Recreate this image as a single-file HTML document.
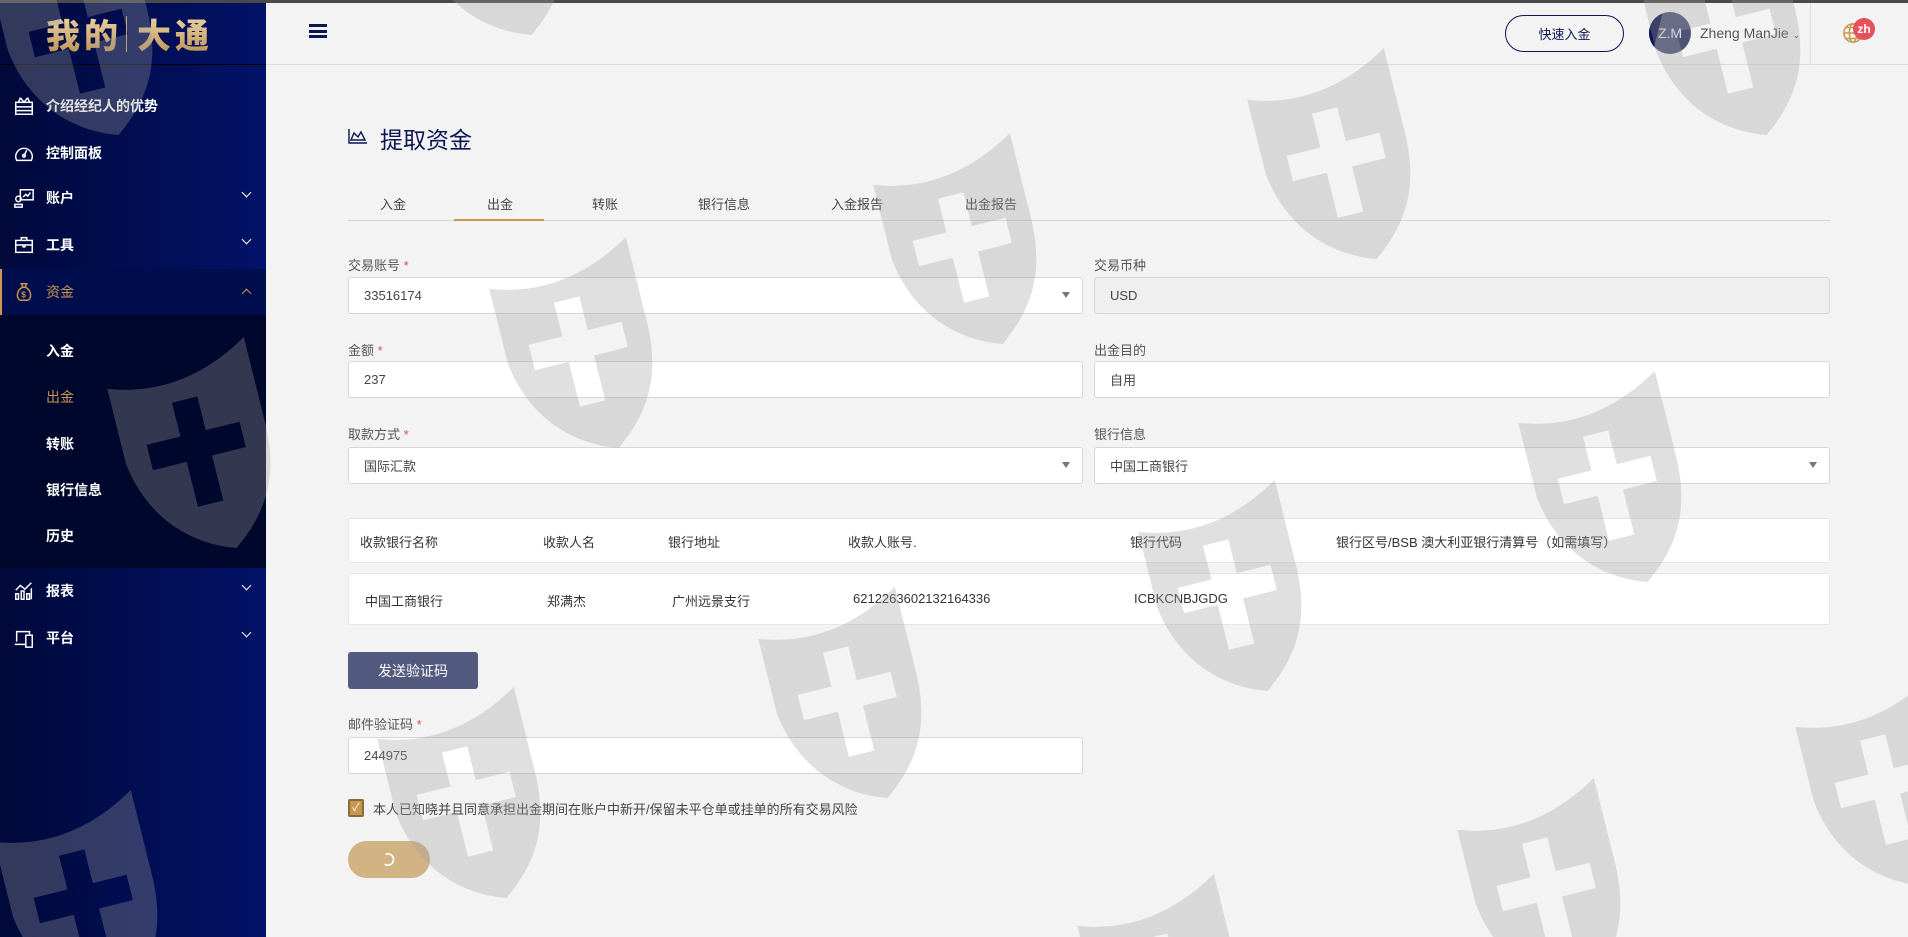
<!DOCTYPE html>
<html><head><meta charset="utf-8">
<style>
*{box-sizing:border-box;margin:0;padding:0}
html,body{width:1908px;height:937px;overflow:hidden}
body{background:#f3f3f3;font-family:"Liberation Sans","Noto Sans CJK SC",sans-serif;position:relative;color:#333}
.topline{position:absolute;left:0;top:0;width:1908px;height:3px;background:#4a4a4a;z-index:5}
.side{position:absolute;left:0;top:0;width:266px;height:937px;background:linear-gradient(90deg,#00093a 0%,#021268 100%)}
.logo{position:absolute;left:0;top:3px;width:266px;height:62px;border-bottom:1px solid #000;display:flex;align-items:center;padding-left:46px}
.logo span{font-family:"Noto Sans CJK SC",sans-serif;font-weight:900;font-size:34px;letter-spacing:4px;color:#d7b27a;background:linear-gradient(180deg,#f3dfb0,#b98d4e);-webkit-background-clip:text;background-clip:text;-webkit-text-fill-color:transparent}
.logo i{display:inline-block;width:1px;height:36px;background:#c9a56a;margin:0 10px 0 4px;vertical-align:middle}
.mi{position:absolute;left:0;width:266px;height:46px;display:flex;align-items:center;color:#fff;font-size:14px;font-weight:bold}
.mi svg{position:absolute;left:13px;width:22px;height:22px}
.mi .t{position:absolute;left:46px}
.mi .ch{position:absolute;left:243px;top:14px;width:7px;height:7px;border-right:1.5px solid #fff;border-bottom:1.5px solid #fff;transform:rotate(45deg)}
.mi .ch.up{top:21px;transform:rotate(-135deg);border-color:#c9974d}
.active{background:#000d4d;border-left:2px solid #c9974d;color:#c9974d}
.sub{position:absolute;left:0;top:315px;width:266px;height:253px;background:#00072c}
.si{position:absolute;left:46px;color:#fff;font-size:14px;font-weight:bold}
.hdr{position:absolute;left:266px;top:3px;right:0;height:62px;border-bottom:1px solid #dcdcdc}
.burger{position:absolute;left:309px;top:24px;width:18px;height:14px;border-top:3px solid #0c1650;border-bottom:3px solid #0c1650}
.burger:after{content:"";position:absolute;left:0;top:3px;width:18px;height:3px;background:#0c1650}
.qbtn{position:absolute;left:1505px;top:15px;width:119px;height:37px;border:1.5px solid #0c1650;border-radius:19px;font-size:13px;color:#0c1650;display:flex;align-items:center;justify-content:center}
.av{position:absolute;left:1649px;top:12px;width:42px;height:42px;border-radius:50%;background:#4e5478;color:#e8e8f0;font-size:14px;display:flex;align-items:center;justify-content:center;overflow:hidden}
.name{position:absolute;left:1700px;top:25px;font-size:14px;color:#555}
.vsep{position:absolute;left:1810px;top:3px;width:1px;height:62px;background:#ddd}
.badge{position:absolute;left:1853px;top:18px;width:22px;height:22px;border-radius:50%;background:#e8505b;color:#fff;font-size:12px;font-weight:bold;display:flex;align-items:center;justify-content:center}
.title{position:absolute;left:380px;top:121px;font-size:23px;color:#0c1650}
.tabs{position:absolute;left:348px;top:220px;width:1482px;height:1px;background:#d4d4d4}
.tab{position:absolute;top:194px;font-size:13px;color:#444}
.uline{position:absolute;left:454px;top:219px;width:90px;height:2px;background:#c9974d}
.lbl{position:absolute;font-size:13px;color:#555}
.lbl b{color:#e04a4a;font-weight:normal}
.inp{position:absolute;height:37px;background:#fff;border:1px solid #d6d6d6;border-radius:3px;font-size:13px;color:#444;padding-left:15px;display:flex;align-items:center}
.inp.dis{background:#efefef}
.arr{position:absolute;right:12px;top:14px;border-left:4px solid transparent;border-right:4px solid transparent;border-top:6px solid #777}
.box{position:absolute;left:348px;width:1482px;background:#fff;border:1px solid #e6e6e6;border-radius:3px}
.c{position:absolute;font-size:13px;color:#333;white-space:nowrap}
.sbtn{position:absolute;left:348px;top:652px;width:130px;height:37px;background:#535a7f;border-radius:3px;color:#fff;font-size:14px;display:flex;align-items:center;justify-content:center}
.cb{position:absolute;left:348px;top:799px;width:16px;height:18px;background:#c9974d;border:2px solid #8a6a3a;border-radius:2px;color:#fff;font-size:11px;text-align:center;line-height:14px}
.gbtn{position:absolute;left:348px;top:841px;width:82px;height:37px;background:#d1b384;border-radius:19px}
.wm{position:absolute;left:0;top:0;width:1908px;height:937px;pointer-events:none;z-index:10}
</style></head><body>
<div class="topline"></div>
<div class="side">
 <div class="logo"><span>我的</span><i></i><span>大通</span></div>
 <div class="mi" style="top:83px"><svg viewBox="0 0 24 24" fill="none" stroke="#fff" stroke-width="1.6"><rect x="3" y="8" width="18" height="13"/><path d="M3 13h18M3 17h18M12 8 8 3M12 8l4-5M8 3l-2 5M16 3l2 5"/></svg><span class="t">介绍经纪人的优势</span></div>
 <div class="mi" style="top:130px"><svg viewBox="0 0 24 24" fill="none" stroke="#fff" stroke-width="1.6"><path d="M4 20a9 9 0 1 1 16 0Z"/><path d="M12 15l3-6"/><circle cx="12" cy="15" r="1.5"/></svg><span class="t">控制面板</span></div>
 <div class="mi" style="top:175px"><svg viewBox="0 0 24 24" fill="none" stroke="#fff" stroke-width="1.6"><rect x="8" y="3" width="14" height="11"/><circle cx="6" cy="13" r="3"/><path d="M2 22v-3h8v3zM11 11l3-3 2 2 3-4"/></svg><span class="t">账户</span><span class="ch"></span></div>
 <div class="mi" style="top:222px"><svg viewBox="0 0 24 24" fill="none" stroke="#fff" stroke-width="1.6"><rect x="3" y="7" width="18" height="13"/><path d="M9 7V4h6v3M3 12h18M11 12v2h2v-2"/></svg><span class="t">工具</span><span class="ch"></span></div>
 <div class="mi active" style="top:269px"><svg viewBox="0 0 24 24" fill="none" stroke="#c9974d" stroke-width="1.6" style="left:11px"><path d="M9 3h6l-2 4h-2zM10 7c-6 3-7 12-2 14h8c5-2 4-11-2-14z"/><text x="9" y="18" font-size="9" fill="#c9974d" stroke="none">$</text></svg><span class="t" style="left:44px;font-weight:normal">资金</span><span class="ch up" style="left:241px"></span></div>
 <div class="sub">
  <div class="si" style="top:26px">入金</div>
  <div class="si" style="top:72px;color:#c9974d;font-weight:normal">出金</div>
  <div class="si" style="top:119px">转账</div>
  <div class="si" style="top:165px">银行信息</div>
  <div class="si" style="top:211px">历史</div>
 </div>
 <div class="mi" style="top:568px"><svg viewBox="0 0 24 24" fill="none" stroke="#fff" stroke-width="1.6"><path d="M3 21v-6h3v6zM9 21v-9h3v9zM15 21v-6h3v6zM20 21V9"/><path d="M3 11l5-5 5 4 7-7"/></svg><span class="t">报表</span><span class="ch"></span></div>
 <div class="mi" style="top:615px"><svg viewBox="0 0 24 24" fill="none" stroke="#fff" stroke-width="1.6"><path d="M4 16V5h14v3M2 19h12"/><rect x="14" y="9" width="7" height="13"/></svg><span class="t">平台</span><span class="ch"></span></div>
</div>
<div class="hdr"></div>
<div class="burger"></div>
<div class="qbtn">快速入金</div>
<div class="av"><div style="position:absolute;left:-14px;top:-4px;width:22px;height:52px;background:#0c1650;transform:rotate(14deg)"></div><span style="position:relative">Z.M</span></div>
<div class="name">Zheng ManJie <span style="font-size:9px">⌄</span></div>
<div class="vsep"></div>
<svg style="position:absolute;left:1842px;top:22px" width="22" height="22" viewBox="0 0 24 24" fill="none" stroke="#c9974d" stroke-width="1.6"><circle cx="12" cy="12" r="10"/><ellipse cx="12" cy="12" rx="4" ry="10"/><path d="M2 12h20M4 6h16M4 18h16"/></svg>
<div class="badge">zh</div>

<svg style="position:absolute;left:348px;top:128px" width="20" height="16" viewBox="0 0 20 16" fill="none" stroke="#0c1650" stroke-width="1.4"><path d="M1 1v14h18M3 12l3-7 4 4 3-5 4 8z"/></svg>
<div class="title">提取资金</div>
<div class="tab" style="left:380px">入金</div>
<div class="tab" style="left:487px">出金</div>
<div class="tab" style="left:592px">转账</div>
<div class="tab" style="left:698px">银行信息</div>
<div class="tab" style="left:831px">入金报告</div>
<div class="tab" style="left:965px">出金报告</div>
<div class="tabs"></div><div class="uline"></div>

<div class="lbl" style="left:348px;top:255px">交易账号 <b>*</b></div>
<div class="inp" style="left:348px;top:277px;width:735px">33516174<i class="arr"></i></div>
<div class="lbl" style="left:1094px;top:255px">交易币种</div>
<div class="inp dis" style="left:1094px;top:277px;width:736px">USD</div>

<div class="lbl" style="left:348px;top:340px">金额 <b>*</b></div>
<div class="inp" style="left:348px;top:361px;width:735px">237</div>
<div class="lbl" style="left:1094px;top:340px">出金目的</div>
<div class="inp" style="left:1094px;top:361px;width:736px">自用</div>

<div class="lbl" style="left:348px;top:424px">取款方式 <b>*</b></div>
<div class="inp" style="left:348px;top:447px;width:735px">国际汇款<i class="arr"></i></div>
<div class="lbl" style="left:1094px;top:424px">银行信息</div>
<div class="inp" style="left:1094px;top:447px;width:736px">中国工商银行<i class="arr"></i></div>

<div class="box" style="top:518px;height:45px"></div>
<div class="c" style="left:360px;top:532px">收款银行名称</div>
<div class="c" style="left:543px;top:532px">收款人名</div>
<div class="c" style="left:668px;top:532px">银行地址</div>
<div class="c" style="left:848px;top:532px">收款人账号.</div>
<div class="c" style="left:1130px;top:532px">银行代码</div>
<div class="c" style="left:1336px;top:532px">银行区号/BSB 澳大利亚银行清算号（如需填写）</div>
<div class="box" style="top:573px;height:52px"></div>
<div class="c" style="left:365px;top:591px">中国工商银行</div>
<div class="c" style="left:547px;top:591px">郑满杰</div>
<div class="c" style="left:672px;top:591px">广州远景支行</div>
<div class="c" style="left:853px;top:591px">6212263602132164336</div>
<div class="c" style="left:1134px;top:591px">ICBKCNBJGDG</div>

<div class="sbtn">发送验证码</div>
<div class="lbl" style="left:348px;top:714px">邮件验证码 <b>*</b></div>
<div class="inp" style="left:348px;top:737px;width:735px">244975</div>
<div class="cb">✓</div>
<div class="c" style="left:373px;top:799px;color:#444">本人已知晓并且同意承担出金期间在账户中新开/保留未平仓单或挂单的所有交易风险</div>
<div class="gbtn"><svg style="position:absolute;left:33px;top:11px" width="15" height="15" viewBox="0 0 16 16" fill="none" stroke="#fff" stroke-width="1.8"><path d="M5 2.5A6 6 0 1 1 4 13"/></svg></div>

<svg class="wm" width="1908" height="937" viewBox="0 0 1908 937">
<defs><path id="sh" fill="#a0a0a0" fill-opacity="0.32" fill-rule="evenodd" d="M-50,-58 Q0,-40 50,-70 L50,-10 C50,35 30,55 10,70 C-20,60 -45,35 -50,-5 Z M-9,-38 h18 v24 h24 v18 h-24 v32 h-18 v-32 h-24 v-18 h24 Z"/></defs>
<g transform="translate(1338,164) rotate(-14) scale(1.45)"><use href="#sh"/></g>
<g transform="translate(964,249) rotate(-14) scale(1.45)"><use href="#sh"/></g>
<g transform="translate(580,353) rotate(-14) scale(1.45)"><use href="#sh"/></g>
<g transform="translate(198,453) rotate(-14) scale(1.45)"><use href="#sh"/></g>
<g transform="translate(1609,487) rotate(-14) scale(1.45)"><use href="#sh"/></g>
<g transform="translate(1229,596) rotate(-14) scale(1.45)"><use href="#sh"/></g>
<g transform="translate(849,703) rotate(-14) scale(1.45)"><use href="#sh"/></g>
<g transform="translate(468,803) rotate(-14) scale(1.45)"><use href="#sh"/></g>
<g transform="translate(85,906) rotate(-14) scale(1.45)"><use href="#sh"/></g>
<g transform="translate(1886,791) rotate(-14) scale(1.45)"><use href="#sh"/></g>
<g transform="translate(1548,894) rotate(-14) scale(1.45)"><use href="#sh"/></g>
<g transform="translate(1168,990) rotate(-14) scale(1.45)"><use href="#sh"/></g>
<g transform="translate(1728,40) rotate(-14) scale(1.45)"><use href="#sh"/></g>
<g transform="translate(493,-60) rotate(-14) scale(1.45)"><use href="#sh"/></g>
<g transform="translate(80,40) rotate(-14) scale(1.45)"><use href="#sh"/></g>
</svg>
</body></html>
